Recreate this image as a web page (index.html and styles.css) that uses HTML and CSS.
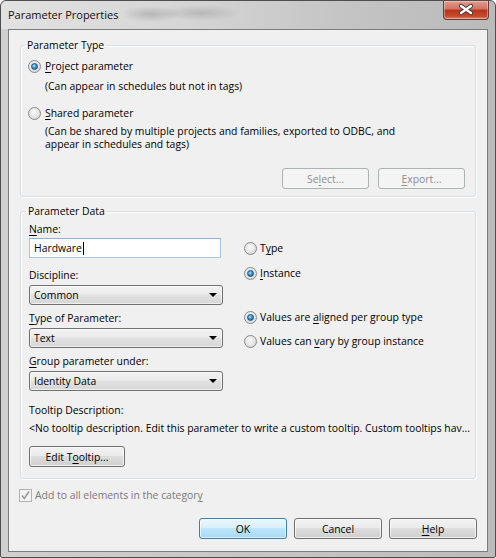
FILE: index.html
```html
<!DOCTYPE html>
<html lang="en">
<head>
  <meta charset="UTF-8" />
  <meta name="viewport" content="width=device-width, initial-scale=1.0"/>
  <title>Parameter Properties</title>
  <link rel="stylesheet" href="styles.css">
</head>
<body>

<div class="window">
  <div class="titlebar">
    <span class="title">Parameter Properties</span>
    <button class="close" aria-label="Close">
      <svg width="46" height="19" viewBox="0 0 46 19">
        <path d="M18 6 L28 13 M28 6 L18 13" stroke="#3a3a3a" stroke-width="4.2" stroke-linecap="round" fill="none"/>
        <path d="M18 6 L28 13 M28 6 L18 13" stroke="#fff" stroke-width="2.4" stroke-linecap="round" fill="none"/>
      </svg>
    </button>
  </div>

  <div class="client">
    <fieldset class="group type-group">
      <legend>Parameter Type</legend>

      <label class="radio on">
        <span class="radio-mark"><span class="radio-dot"></span></span>
        <span><u>P</u>roject parameter</span>
      </label>
      <p class="note first-note">(Can appear in schedules but not in tags)</p>

      <label class="radio shared-radio">
        <span class="radio-mark"><span class="radio-dot"></span></span>
        <span><u>S</u>hared parameter</span>
      </label>
      <p class="note second-note">(Can be shared by multiple projects and families, exported to ODBC, and<br>appear in schedules and tags)</p>

      <div class="group-actions">
        <button class="btn" disabled>Se<u>l</u>ect...</button>
        <button class="btn" disabled><u>E</u>xport...</button>
      </div>
    </fieldset>

    <fieldset class="group data-group">
      <legend>Parameter Data</legend>

      <div class="data-cols">
        <div class="fields">
          <label class="field-label"><u>N</u>ame:</label>
          <div class="textbox">Hardware<span class="caret"></span></div>

          <label class="field-label spaced">Discipline:</label>
          <div class="combo"><span>Common</span><span class="arrow"></span></div>

          <label class="field-label"><u>T</u>ype of Parameter:</label>
          <div class="combo"><span>Text</span><span class="arrow"></span></div>

          <label class="field-label"><u>G</u>roup parameter under:</label>
          <div class="combo"><span>Identity Data</span><span class="arrow"></span></div>
        </div>

        <div class="options">
          <label class="radio">
            <span class="radio-mark"><span class="radio-dot"></span></span>
            <span>T<u>y</u>pe</span>
          </label>
          <label class="radio on opt-instance">
            <span class="radio-mark"><span class="radio-dot"></span></span>
            <span><u>I</u>nstance</span>
          </label>
          <label class="radio on opt-aligned">
            <span class="radio-mark"><span class="radio-dot"></span></span>
            <span>Values are <u>a</u>ligned per group type</span>
          </label>
          <label class="radio opt-vary">
            <span class="radio-mark"><span class="radio-dot"></span></span>
            <span>Values can <u>v</u>ary by group instance</span>
          </label>
        </div>
      </div>

      <div class="tooltip-block">
        <div class="field-label">Tooltip Description:</div>
        <div class="tooltip-text">&lt;No tooltip description. Edit this parameter to write a custom tooltip. Custom tooltips hav...</div>
        <button class="btn edit-tooltip">Edit T<u>o</u>oltip...</button>
      </div>
    </fieldset>

    <label class="check">
      <span class="check-box">
        <svg width="11" height="11" viewBox="0 0 11 11">
          <path d="M2 5.5 L4.3 8.5 L9 1.5" stroke="#9a9a9a" stroke-width="1.6" fill="none"/>
        </svg>
      </span>
      <span>Add to all elements in the categor<u>y</u></span>
    </label>

    <div class="dialog-actions">
      <button class="btn default">OK</button>
      <button class="btn">Cancel</button>
      <button class="btn"><u>H</u>elp</button>
    </div>
  </div>
</div>

</body>
</html>
```

FILE: styles.css
```css
* {
  box-sizing: border-box;
}
body {
  margin: 0;
  background: #fff;
  font-family: "Open Sans", "Noto Sans", sans-serif;
  font-size: 10.4px;
  color: #000;
}
u {
  text-decoration-thickness: 1px;
  text-underline-offset: 2px;
}

/* window frame */
.window {
  width: 496px;
  height: 558px;
  display: flex;
  flex-direction: column;
  border: 1px solid #4e4e4e;
  border-radius: 6px 6px 2px 2px;
  background: linear-gradient(to right, #cfcfcf, #c6c6c6 50%, #bcbcbc);
  padding: 0 7px 5px;
}
.titlebar {
  height: 28px;
  display: flex;
  justify-content: space-between;
  align-items: flex-start;
  margin: 0 -7px;
  padding: 0 6px 0 7px;
  background:
    radial-gradient(ellipse 30px 8px at 150px 13px, rgba(120,120,120,.35), transparent),
    radial-gradient(ellipse 40px 8px at 200px 12px, rgba(120,120,120,.3), transparent),
    linear-gradient(to right, #e2e2e2, #d4d4d4 40%, #c4c4c4 70%, #bababa);
  border-radius: 6px 6px 0 0;
}
.title {
  font-size: 11px;
  line-height: 28px;
  color: #111;
}
.close {
  width: 46px;
  height: 19px;
  padding: 0;
  border: 1px solid #6b3a33;
  border-top: none;
  border-radius: 0 0 4px 4px;
  background: linear-gradient(#e19c8d, #d0735f 45%, #b8331d 50%, #c84a2e 85%, #e0876a);
  box-shadow: inset 0 0 0 1px rgba(255,255,255,.35);
}
.close svg {
  display: block;
  margin: -1px 0 0 -1px;
}

/* client area */
.client {
  flex: 1;
  background: #f0f0f0;
  border: 1px solid #7c7c7c;
  padding: 0 11px;
  display: flex;
  flex-direction: column;
}

/* group boxes */
.group {
  margin: 8px 0 0;
  padding: 0 10px 7px 7px;
  border: 1px solid #d5dfe5;
  border-radius: 3px;
  box-shadow: inset 1px 1px #fff, 1px 1px #fff;
  min-width: 0;
}
.group legend {
  padding: 0 2px;
  margin-left: -3px;
  line-height: 14px;
}
.data-group {
  margin-top: 7px;
  padding: 0 10px 11px 8px;
}

/* radio buttons */
.radio {
  display: flex;
  align-items: center;
  gap: 4px;
  line-height: 14px;
  height: 14px;
}
.radio-mark {
  width: 13px;
  height: 13px;
  border-radius: 50%;
  border: 1px solid #888989;
  background: radial-gradient(circle at 45% 40%, #fafafa, #e4e4e4 55%, #c9c9c9);
  display: flex;
  align-items: center;
  justify-content: center;
}
.radio-dot {
  width: 7px;
  height: 7px;
  border-radius: 50%;
}
.radio.on .radio-dot {
  border: 1px solid #1b4f7c;
  background: radial-gradient(circle at 40% 35%, #b5e3fb, #3f95cf 45%, #17598f);
}
.type-group .radio {
  margin-top: 7px;
}
.type-group .shared-radio {
  margin-top: 13px;
}
.note {
  margin: 7px 0 0 17px;
  line-height: 13px;
}
.second-note {
  margin-top: 5px;
}
.group-actions {
  display: flex;
  justify-content: flex-end;
  gap: 9px;
  margin-top: 17px;
}
.group-actions .btn {
  width: 87px;
}

/* buttons */
.btn {
  height: 21px;
  border: 1px solid #707070;
  border-radius: 3px;
  background: linear-gradient(#f2f2f2, #ebebeb 45%, #dddddd 50%, #cfcfcf);
  box-shadow: inset 0 0 0 1px rgba(255,255,255,.7);
  font: inherit;
  color: #000;
  padding: 0;
}
.btn:disabled {
  border-color: #adb2b5;
  background: #f4f4f4;
  box-shadow: none;
  color: #8d8d8d;
}
.btn.default {
  border-color: #3c7fb1;
  background: linear-gradient(#eaf6fd, #d9f0fc 45%, #bee6fd 50%, #a7d9f5);
  box-shadow: inset 0 0 0 1px rgba(255,255,255,.6);
}

/* parameter data */
.data-cols {
  display: flex;
  gap: 21px;
  margin-top: 4px;
}
.fields {
  width: 194px;
  display: flex;
  flex-direction: column;
}
.field-label {
  display: block;
  line-height: 14px;
  margin-top: 6px;
}
.fields .field-label:first-child {
  margin-top: 0;
}
.field-label.spaced {
  margin-top: 10px;
}
.textbox {
  width: 192px;
  height: 20px;
  margin-top: 2px;
  border: 1px solid #a9c6e4;
  border-top-color: #8fb2d6;
  background: #fff;
  padding: 0 4px;
  line-height: 18px;
  display: flex;
  align-items: center;
}
.caret {
  width: 1px;
  height: 13px;
  background: #000;
  margin-left: 1px;
}
.combo {
  width: 194px;
  height: 20px;
  margin-top: 3px;
  border: 1px solid #707070;
  border-radius: 3px;
  background: linear-gradient(#f2f2f2, #ebebeb 45%, #e2e2e2 50%, #d6d6d6);
  box-shadow: inset 0 0 0 1px rgba(255,255,255,.6);
  padding: 0 5px 0 4px;
  display: flex;
  align-items: center;
  justify-content: space-between;
}
.arrow {
  width: 0;
  height: 0;
  border-left: 4px solid transparent;
  border-right: 4px solid transparent;
  border-top: 4px solid #000;
}
.options {
  padding-top: 19px;
}
.options .radio {
  gap: 3px;
}
.opt-instance {
  margin-top: 11px;
}
.opt-aligned {
  margin-top: 30px;
}
.opt-vary {
  margin-top: 10px;
}
.tooltip-block .field-label {
  margin-top: 12px;
}
.tooltip-text {
  margin-top: 4px;
  line-height: 14px;
  white-space: nowrap;
}
.edit-tooltip {
  display: block;
  width: 96px;
  margin-top: 11px;
}

/* footer */
.check {
  display: flex;
  align-items: center;
  gap: 3px;
  margin: 9px 0 0 -1px;
  line-height: 14px;
  color: #7a7a7a;
}
.check-box {
  width: 13px;
  height: 13px;
  border: 1px solid #b1b1b1;
  background: #f4f4f4;
  display: flex;
  align-items: center;
  justify-content: center;
}
.dialog-actions {
  display: flex;
  justify-content: flex-end;
  gap: 7px;
  margin: 16px -1px 0 0;
}
.dialog-actions .btn {
  width: 88px;
}
```
